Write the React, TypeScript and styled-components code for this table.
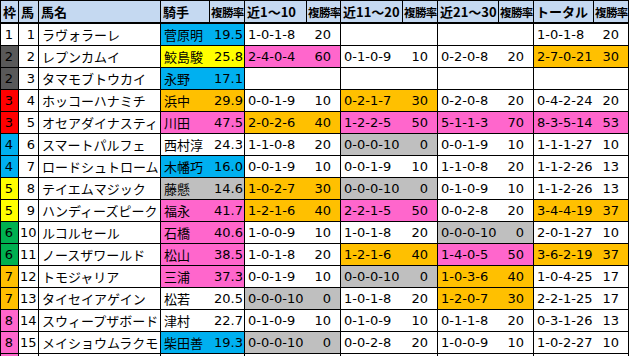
import React from "react";
import styled, { createGlobalStyle } from "styled-components";

type Tone = "w" | "y" | "b" | "o" | "p" | "g" | "d" | "r" | "gr";

const tones: Record<Tone, string> = {
  w: "#ffffff",
  y: "#ffff00",
  b: "#00b0f0",
  o: "#ffc000",
  p: "#ff66cc",
  g: "#bfbfbf",
  d: "#595959",
  r: "#ff0000",
  gr: "#00b050",
};

const wakuTone: Record<number, Tone> = {
  1: "w",
  2: "d",
  3: "r",
  4: "b",
  5: "y",
  6: "gr",
  7: "o",
  8: "p",
};

type Rec = [string, string, Tone] | null;

interface Horse {
  waku: number;
  showWaku?: boolean;
  no: number | string;
  name: string;
  jockey: string;
  jTone: Tone;
  rate: string;
  recs: Rec[];
}

const horses: Horse[] = [
  { waku: 1, no: 1, name: "ラヴォラーレ", jockey: "菅原明", jTone: "b", rate: "19.5",
    recs: [["1-0-1-8", "20", "w"], null, null, ["1-0-1-8", "20", "w"]] },
  { waku: 2, no: 2, name: "レプンカムイ", jockey: "鮫島駿", jTone: "y", rate: "25.8",
    recs: [["2-4-0-4", "60", "p"], ["0-1-0-9", "10", "w"], ["0-2-0-8", "20", "w"], ["2-7-0-21", "30", "o"]] },
  { waku: 2, no: 3, name: "タマモブトウカイ", jockey: "永野", jTone: "b", rate: "17.1",
    recs: [null, null, null, null] },
  { waku: 3, no: 4, name: "ホッコーハナミチ", jockey: "浜中", jTone: "o", rate: "29.9",
    recs: [["0-0-1-9", "10", "w"], ["0-2-1-7", "30", "o"], ["0-2-0-8", "20", "w"], ["0-4-2-24", "20", "w"]] },
  { waku: 3, no: 5, name: "オセアダイナスティ", jockey: "川田", jTone: "p", rate: "47.5",
    recs: [["2-0-2-6", "40", "o"], ["1-2-2-5", "50", "p"], ["5-1-1-3", "70", "p"], ["8-3-5-14", "53", "p"]] },
  { waku: 4, no: 6, name: "スマートパルフェ", jockey: "西村淳", jTone: "w", rate: "24.3",
    recs: [["1-1-0-8", "20", "w"], ["0-0-0-10", "0", "g"], ["0-0-1-9", "10", "w"], ["1-1-1-27", "10", "w"]] },
  { waku: 4, no: 7, name: "ロードシュトローム", jockey: "木幡巧", jTone: "b", rate: "16.0",
    recs: [["0-0-1-9", "10", "w"], ["0-0-1-9", "10", "w"], ["1-1-0-8", "20", "w"], ["1-1-2-26", "13", "w"]] },
  { waku: 5, no: 8, name: "テイエムマジック", jockey: "藤懸", jTone: "g", rate: "14.6",
    recs: [["1-0-2-7", "30", "o"], ["0-0-0-10", "0", "g"], ["0-1-0-9", "10", "w"], ["1-1-2-26", "13", "w"]] },
  { waku: 5, no: 9, name: "ハンディーズピーク", jockey: "福永", jTone: "p", rate: "41.7",
    recs: [["1-2-1-6", "40", "o"], ["2-2-1-5", "50", "p"], ["0-0-2-8", "20", "w"], ["3-4-4-19", "37", "o"]] },
  { waku: 6, no: 10, name: "ルコルセール", jockey: "石橋", jTone: "p", rate: "40.6",
    recs: [["1-0-0-9", "10", "w"], ["1-0-1-8", "20", "w"], ["0-0-0-10", "0", "g"], ["2-0-1-27", "10", "w"]] },
  { waku: 6, no: 11, name: "ノースザワールド", jockey: "松山", jTone: "p", rate: "38.5",
    recs: [["1-0-1-8", "20", "w"], ["1-2-1-6", "40", "o"], ["1-4-0-5", "50", "p"], ["3-6-2-19", "37", "o"]] },
  { waku: 7, no: 12, name: "トモジャリア", jockey: "三浦", jTone: "p", rate: "37.3",
    recs: [["0-0-1-9", "10", "w"], ["0-0-0-10", "0", "g"], ["1-0-3-6", "40", "o"], ["1-0-4-25", "17", "w"]] },
  { waku: 7, no: 13, name: "タイセイアゲイン", jockey: "松若", jTone: "w", rate: "20.5",
    recs: [["0-0-0-10", "0", "g"], ["1-0-1-8", "20", "w"], ["1-2-0-7", "30", "o"], ["2-2-1-25", "17", "w"]] },
  { waku: 8, no: 14, name: "スウィープザボード", jockey: "津村", jTone: "w", rate: "22.7",
    recs: [["0-1-0-9", "10", "w"], ["0-1-0-9", "10", "w"], ["0-1-1-8", "20", "w"], ["0-3-1-26", "13", "w"]] },
  { waku: 8, no: 15, name: "メイショウムラクモ", jockey: "柴田善", jTone: "b", rate: "19.3",
    recs: [["0-0-0-10", "0", "g"], ["0-0-2-8", "20", "w"], ["1-0-0-9", "10", "w"], ["1-0-2-27", "10", "w"]] },
  // next row is cut off by the window edge; only its fill shows
  { waku: 8, showWaku: false, no: "", name: "", jockey: "", jTone: "w", rate: "",
    recs: [null, null, null, null] },
];

const widths = [18, 20, 122, 49, 35, 62, 34, 62, 35, 61, 35, 60, 35];

const headers = ["枠", "馬", "馬名", "騎手", "複勝率", "近1～10", "複勝率", "近11～20", "複勝率", "近21～30", "複勝率", "トータル", "複勝率"];

const GlobalStyle = createGlobalStyle`
  html, body {
    margin: 0;
    padding: 0;
    background: #fff;
  }
  body {
    font-family: "DejaVu Sans", "Noto Sans CJK JP", sans-serif;
  }
`;

const Sheet = styled.div`
  width: 629px;
  height: 356px;
  overflow: hidden;
`;

const Table = styled.table`
  border-collapse: collapse;
  table-layout: fixed;
  width: 629px;
  color: #000;
  font-size: 13px;
`;

const HeadCell = styled.th<{ $tight?: boolean }>`
  height: 21px;
  padding: 0 ${(p) => (p.$tight ? "1px" : "2px")};
  background: #c5d9f1;
  border: 1px solid #000;
  border-bottom: 2px solid #000;
  font-family: "Noto Sans CJK JP", sans-serif;
  font-weight: 700;
  font-size: ${(p) => (p.$tight ? "11.5px" : "13px")};
  letter-spacing: ${(p) => (p.$tight ? "-0.6px" : "0")};
  text-align: left;
  white-space: nowrap;
  overflow: hidden;
  line-height: 20px;
`;

const Cell = styled.td<{ $bg?: Tone; $align?: "left" | "right" | "center"; $joined?: boolean; $pad?: number }>`
  height: 21px;
  padding: 0 ${(p) => (p.$align === "right" ? p.$pad ?? 3 : 2)}px 0 ${(p) => (p.$align === "left" || !p.$align ? 3 : 1)}px;
  background: ${(p) => tones[p.$bg ?? "w"]};
  border: 1px solid #000;
  border-left: ${(p) => (p.$joined ? "none" : "1px solid #000")};
  text-align: ${(p) => p.$align ?? "left"};
  white-space: nowrap;
  overflow: hidden;
  line-height: 21px;
`;

const NameCell = styled(Cell)`
  font-family: "Noto Sans CJK JP", sans-serif;
`;

const LeadCell = styled(Cell)`
  border-right: none;
`;

const JockeyCell = styled(LeadCell)`
  font-family: "Noto Sans CJK JP", sans-serif;
`;

function Group({ rec }: { rec: Rec }) {
  const tone: Tone = rec ? rec[2] : "w";
  return (
    <>
      <LeadCell $bg={tone}>{rec ? rec[0] : ""}</LeadCell>
      <Cell $bg={tone} $align="right" $pad={9} $joined>
        {rec ? rec[1] : ""}
      </Cell>
    </>
  );
}

export default function App() {
  return (
    <Sheet>
      <GlobalStyle />
      <Table>
        <colgroup>
          {widths.map((w, i) => (
            <col key={i} style={{ width: w }} />
          ))}
        </colgroup>
        <thead>
          <tr>
            {headers.map((h, i) => (
              <HeadCell key={i} $tight={h === "複勝率"}>
                {h}
              </HeadCell>
            ))}
          </tr>
        </thead>
        <tbody>
          {horses.map((h, i) => (
            <tr key={i}>
              <Cell $bg={wakuTone[h.waku]} $align="center">
                {h.showWaku === false ? "" : h.waku}
              </Cell>
              <Cell $align="right" $pad={3}>
                {h.no}
              </Cell>
              <NameCell>{h.name}</NameCell>
              <JockeyCell $bg={h.jTone}>{h.jockey}</JockeyCell>
              <Cell $bg={h.jTone} $align="right" $pad={1} $joined>
                {h.rate}
              </Cell>
              {h.recs.map((r, k) => (
                <Group key={k} rec={r} />
              ))}
            </tr>
          ))}
        </tbody>
      </Table>
    </Sheet>
  );
}
